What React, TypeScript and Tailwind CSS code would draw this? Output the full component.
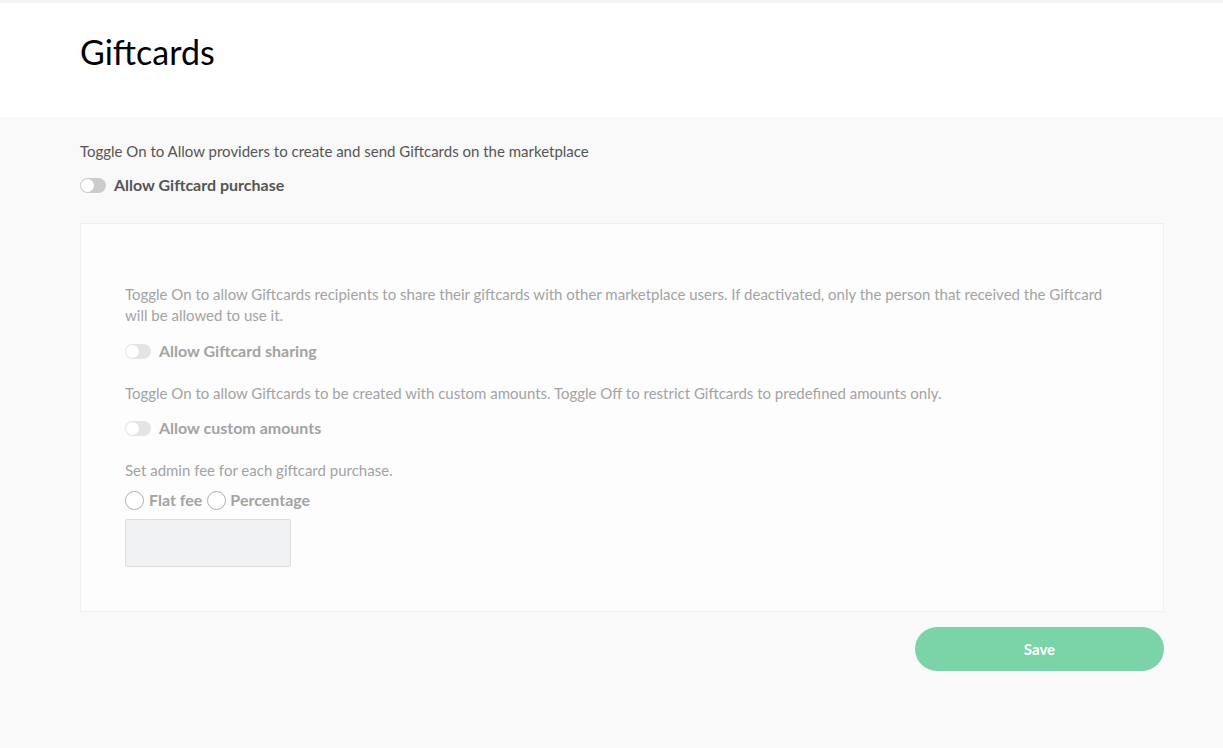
import React, { useState } from "react";

const Toggle = ({ on, disabled }: { on: boolean; disabled?: boolean }) => (
  <span
    className={`relative inline-block w-[26px] h-[15px] rounded-full shrink-0 ${
      on ? "bg-[#7bd4a7]" : disabled ? "bg-[#e4e4e4]" : "bg-[#cccccc]"
    }`}
  >
    <span
      className={`absolute top-[1px] w-[13px] h-[13px] rounded-full bg-white ${
        on ? "left-[12px]" : "left-[1px]"
      }`}
    />
  </span>
);

const Radio = () => (
  <span className="inline-block w-[19px] h-[19px] rounded-full border border-[#b0b0b0] bg-white shrink-0" />
);

export default function App() {
  const [purchase] = useState(false);

  return (
    <div
      className="min-h-[748px] bg-[#f9f9f9] text-[#555]"
      style={{ fontFamily: "Lato, 'Open Sans', sans-serif" }}
    >
      <div className="h-[3px] bg-[#f4f4f4]" />
      <header className="bg-white h-[114px] flex items-center px-[80px]">
        <h1 className="text-[34px] text-black font-normal leading-none pb-[16px]">
          Giftcards
        </h1>
      </header>

      <main className="pl-[80px] pr-[59px] pt-[24px]">
        <p className="text-[15px] leading-[21px] text-[#555]">
          Toggle On to Allow providers to create and send Giftcards on the marketplace
        </p>
        <label className="flex items-center gap-[8px] mt-[11px] h-[24px]">
          <Toggle on={purchase} />
          <span className="text-[16px] font-bold text-[#555]">Allow Giftcard purchase</span>
        </label>

        <section className="mt-[26px] bg-[#fdfdfd] border border-[#efefef] px-[44px] pt-[60px] pb-[44px] text-[#a3a3a3]">
          <p className="text-[15px] leading-[21px]">
            Toggle On to allow Giftcards recipients to share their giftcards with other marketplace users. If deactivated, only the person that received the Giftcard will be allowed to use it.
          </p>
          <label className="flex items-center gap-[8px] mt-[13px] h-[24px]">
            <Toggle on={false} disabled />
            <span className="text-[16px] font-bold">Allow Giftcard sharing</span>
          </label>

          <p className="text-[15px] leading-[21px] mt-[20px]">
            Toggle On to allow Giftcards to be created with custom amounts. Toggle Off to restrict Giftcards to predefined amounts only.
          </p>
          <label className="flex items-center gap-[8px] mt-[12px] h-[24px]">
            <Toggle on={false} disabled />
            <span className="text-[16px] font-bold">Allow custom amounts</span>
          </label>

          <p className="text-[15px] leading-[21px] mt-[20px]">
            Set admin fee for each giftcard purchase.
          </p>
          <div className="flex items-center mt-[7px] h-[24px] text-[16px] font-bold">
            <Radio />
            <span className="ml-[5px] mr-[5px]">Flat fee</span>
            <Radio />
            <span className="ml-[4px]">Percentage</span>
          </div>
          <input
            disabled
            className="block mt-[7px] w-[166px] h-[48px] bg-[#f1f2f4] border border-[#dedede] rounded-[2px]"
          />
        </section>

        <div className="flex justify-end mt-[15px]">
          <button className="w-[249px] h-[44px] rounded-full bg-[#7bd4a7] text-white text-[15px] font-bold">
            Save
          </button>
        </div>
      </main>
    </div>
  );
}
